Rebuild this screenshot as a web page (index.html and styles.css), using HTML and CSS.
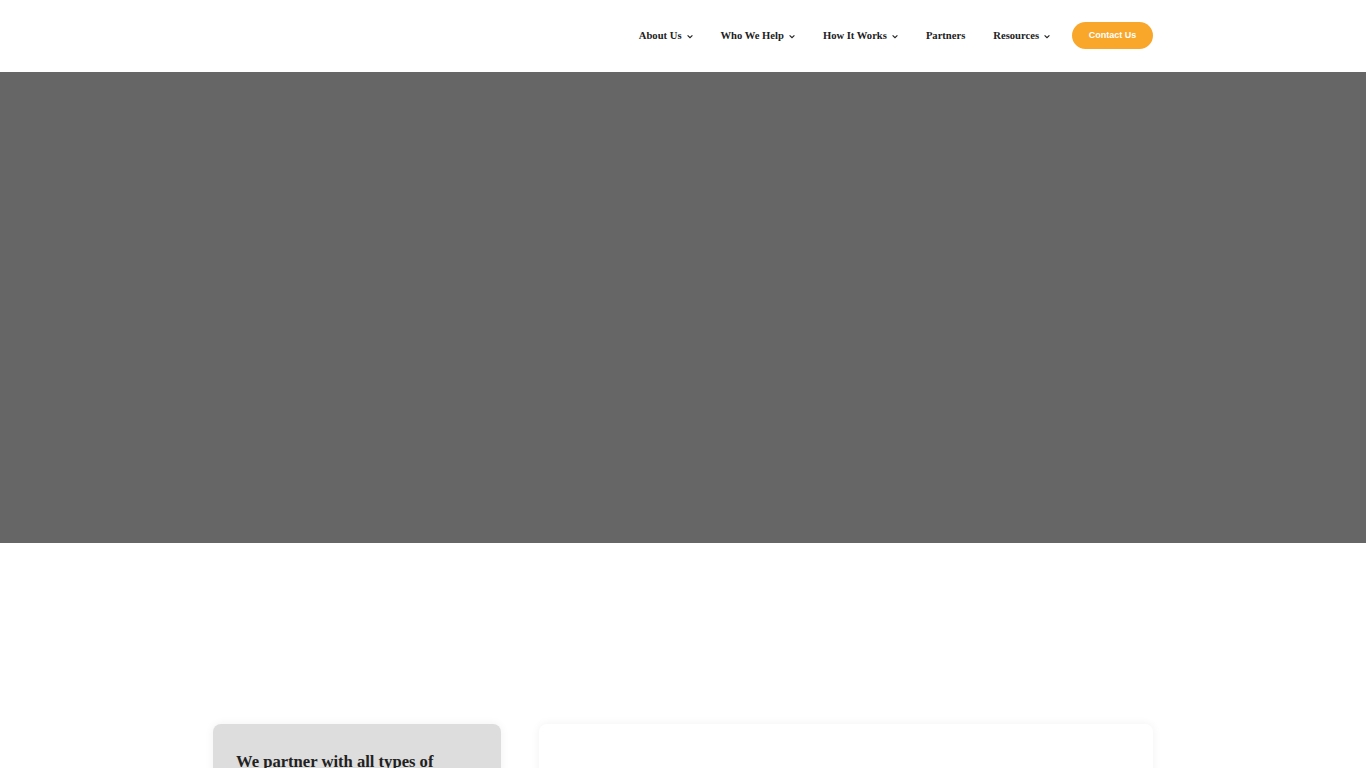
FILE: index.html
```html
<!DOCTYPE html>
<html lang="en">
<head>
<meta charset="utf-8">
<title>Home</title>
<link rel="stylesheet" href="styles.css">
</head>
<body>
<header class="site-header">
  <div class="container header-inner">
    <div class="logo"></div>
    <nav class="nav">
      <a class="nav-item" href="#">About Us <svg class="chev" viewBox="0 0 10 6"><path d="M1 1l4 4 4-4" /></svg></a>
      <a class="nav-item" href="#">Who We Help <svg class="chev" viewBox="0 0 10 6"><path d="M1 1l4 4 4-4" /></svg></a>
      <a class="nav-item" href="#">How It Works <svg class="chev" viewBox="0 0 10 6"><path d="M1 1l4 4 4-4" /></svg></a>
      <a class="nav-item" href="#">Partners</a>
      <a class="nav-item" href="#">Resources <svg class="chev" viewBox="0 0 10 6"><path d="M1 1l4 4 4-4" /></svg></a>
      <a class="btn-contact" href="#">Contact Us</a>
    </nav>
  </div>
</header>
<section class="hero"></section>
<section class="partners">
  <div class="container cards">
    <div class="card card-grey">
      <h2 class="card-title">We partner with all types of</h2>
    </div>
    <div class="card card-white"></div>
  </div>
</section>
</body>
</html>
```

FILE: styles.css
```css
* { box-sizing: border-box; }
html, body { margin: 0; padding: 0; }
body {
  background: #fff;
  font-family: "Liberation Serif", "Times New Roman", serif;
  color: #222;
  overflow: hidden;
}
.container {
  width: 940px;
  margin: 0 auto;
}
.site-header {
  height: 72px;
  background: #fff;
}
.header-inner {
  height: 70px;
  display: flex;
  align-items: center;
  justify-content: space-between;
}
.nav {
  display: flex;
  align-items: center;
}
.nav-item {
  display: flex;
  align-items: center;
  font-weight: bold;
  font-size: 10.6px;
  color: #222;
  text-decoration: none;
  margin-right: 28px;
}
.chev {
  width: 6px;
  height: 5px;
  margin-left: 5px;
  margin-top: 2px;
  fill: none;
  stroke: #222;
  stroke-width: 1.9;
}
.btn-contact {
  display: flex;
  align-items: center;
  justify-content: center;
  width: 81px;
  height: 27px;
  border-radius: 14px;
  background: #f9a72b;
  color: #fff;
  font-family: "Liberation Sans", Arial, sans-serif;
  font-weight: bold;
  font-size: 9px;
  text-decoration: none;
  margin-left: -6px;
}
.hero {
  height: 471px;
  background: #666666;
}
.partners {
  padding-top: 181px;
}
.cards {
  display: flex;
  gap: 38px;
}
.card {
  border-radius: 8px;
  box-shadow: 0 0 10px rgba(0,0,0,0.06);
  height: 300px;
}
.card-grey {
  width: 288px;
  background: #dddddd;
  padding: 27px 23px;
}
.card-white {
  flex: 1;
  background: #fff;
}
.card-title {
  margin: 0;
  font-size: 16.6px;
  font-weight: bold;
  line-height: 1.3;
  color: #222;
}
```
